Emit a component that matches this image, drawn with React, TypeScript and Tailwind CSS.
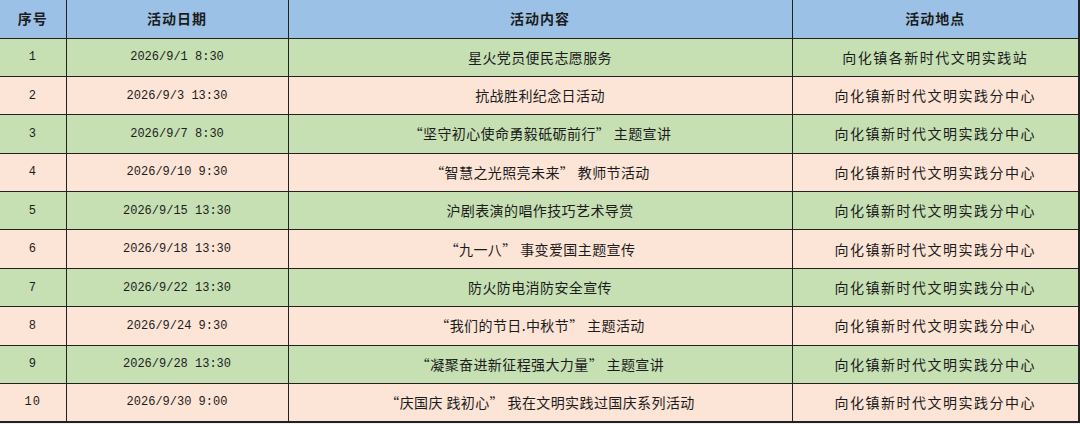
const rows = [
  { no: 1, date: '2026/9/1 8:30', content: '星火党员便民志愿服务', place: '向化镇各新时代文明实践站' },
  { no: 2, date: '2026/9/3 13:30', content: '抗战胜利纪念日活动', place: '向化镇新时代文明实践分中心' },
  { no: 3, date: '2026/9/7 8:30', content: '“坚守初心使命勇毅砥砺前行” 主题宣讲', place: '向化镇新时代文明实践分中心' },
  { no: 4, date: '2026/9/10 9:30', content: '“智慧之光照亮未来” 教师节活动', place: '向化镇新时代文明实践分中心' },
  { no: 5, date: '2026/9/15 13:30', content: '沪剧表演的唱作技巧艺术导赏', place: '向化镇新时代文明实践分中心' },
  { no: 6, date: '2026/9/18 13:30', content: '“九一八” 事变爱国主题宣传', place: '向化镇新时代文明实践分中心' },
  { no: 7, date: '2026/9/22 13:30', content: '防火防电消防安全宣传', place: '向化镇新时代文明实践分中心' },
  { no: 8, date: '2026/9/24 9:30', content: '“我们的节日.中秋节” 主题活动', place: '向化镇新时代文明实践分中心' },
  { no: 9, date: '2026/9/28 13:30', content: '“凝聚奋进新征程强大力量” 主题宣讲', place: '向化镇新时代文明实践分中心' },
  { no: 10, date: '2026/9/30 9:00', content: '“庆国庆 践初心” 我在文明实践过国庆系列活动', place: '向化镇新时代文明实践分中心' },
];

const cjk = "font-['Noto_Sans_CJK_SC',sans-serif]";
const mono = "font-['Liberation_Mono','Noto_Sans_CJK_SC',monospace]";

export default function App() {
  return (
    <div className="min-h-screen w-[1080px] bg-[#f2f2f2] text-[#1c1c1c]">
      <table className="w-[1079px] table-fixed border-collapse">
        <colgroup>
          <col className="w-[66px]" />
          <col className="w-[222px]" />
          <col className="w-[504px]" />
          <col className="w-[287px]" />
        </colgroup>
        <thead>
          <tr className={`h-[38px] bg-[#9bc2e6] text-[14px] font-bold tracking-[1px] ${cjk}`}>
            <th className="border-r border-b border-[#222] p-0 text-center">序号</th>
            <th className="border-r border-b border-[#222] p-0 text-center">活动日期</th>
            <th className="border-r border-b border-[#222] p-0 text-center">活动内容</th>
            <th className="border-r-2 border-b border-[#222] p-0 text-center">活动地点</th>
          </tr>
        </thead>
        <tbody>
          {rows.map((r, i) => (
            <tr
              key={r.no}
              className={`h-[38.4px] ${i % 2 === 0 ? 'bg-[#c6e0b4]' : 'bg-[#fce4d6]'} ${i === rows.length - 1 ? 'border-b-2 border-[#222]' : ''}`}
            >
              <td className={`border-r border-b border-[#222] p-0 text-center text-[12px] tracking-[1px] ${mono}`}>{r.no}</td>
              <td className={`border-r border-b border-[#222] p-0 text-center text-[12px] ${mono}`}>{r.date}</td>
              <td className={`border-r border-b border-[#222] p-0 text-center text-[14px] tracking-[0.4px] ${cjk}`}>{r.content}</td>
              <td className={`border-r-2 border-b border-[#222] p-0 text-center text-[14px] tracking-[1.5px] ${cjk}`}>{r.place}</td>
            </tr>
          ))}
        </tbody>
      </table>
    </div>
  );
}
